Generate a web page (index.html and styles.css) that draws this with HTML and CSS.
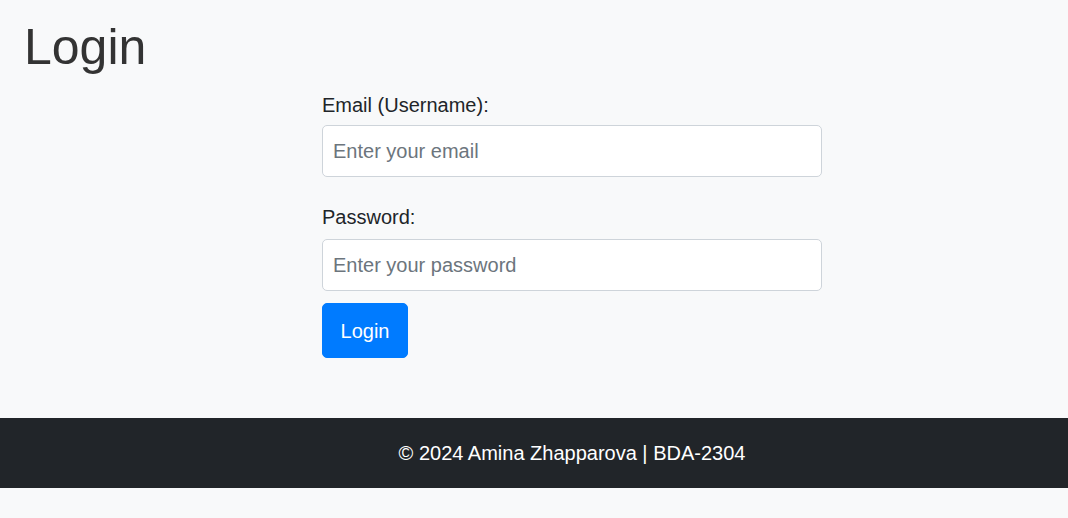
FILE: index.html
```html
<!DOCTYPE html>
<html lang="en">
<head>
<meta charset="utf-8">
<title>Login</title>
<link rel="stylesheet" href="styles.css">
</head>
<body>
<h1 class="page-title">Login</h1>
<main class="main">
  <form class="login-form">
    <div class="form-group">
      <label class="form-label" for="email">Email (Username):</label>
      <input class="form-control" id="email" type="email" placeholder="Enter your email">
    </div>
    <div class="form-group form-group-last">
      <label class="form-label form-label-second" for="password">Password:</label>
      <input class="form-control" id="password" type="password" placeholder="Enter your password">
    </div>
    <button class="btn-primary" type="submit">Login</button>
  </form>
</main>
<footer class="footer">
  <p class="footer-text">© 2024 Amina Zhapparova | BDA-2304</p>
</footer>
</body>
</html>
```
FILE: styles.css
```css
* { box-sizing: border-box; }
html, body {
  margin: 0;
  background: #f8f9fa;
  font-family: "Liberation Sans", Arial, sans-serif;
  color: #212529;
}
.page-title {
  margin: 0;
  padding: 17px 24px 0;
  font-size: 50px;
  line-height: 60px;
  font-weight: 400;
  color: #333;
}
.main {
  padding: 13px 0 60px 76px;
}
.login-form {
  width: 500px;
  margin: 0 auto;
}
.form-group {
  margin-bottom: 25px;
}
.form-group-last {
  margin-bottom: 12px;
}
.form-label {
  display: block;
  font-size: 20px;
  line-height: 30px;
  margin-bottom: 5px;
}
.form-label-second {
  margin-bottom: 7px;
}
.form-control {
  display: block;
  width: 100%;
  height: 52px;
  padding: 0 10px;
  font-family: inherit;
  font-size: 20px;
  color: #495057;
  background: #fff;
  border: 1px solid #ced4da;
  border-radius: 5px;
}
.form-control::placeholder {
  color: #6c757d;
  opacity: 1;
}
.btn-primary {
  display: block;
  width: 86px;
  height: 55px;
  padding: 0;
  font-family: inherit;
  font-size: 20px;
  line-height: 30px;
  text-align: center;
  color: #fff;
  background: #007bff;
  border: 1px solid #007bff;
  border-radius: 5px;
}
.footer {
  background: #212529;
  padding: 20px 0 20px 76px;
  text-align: center;
}
.footer-text {
  margin: 0;
  font-size: 20px;
  line-height: 30px;
  color: #fff;
}
```
